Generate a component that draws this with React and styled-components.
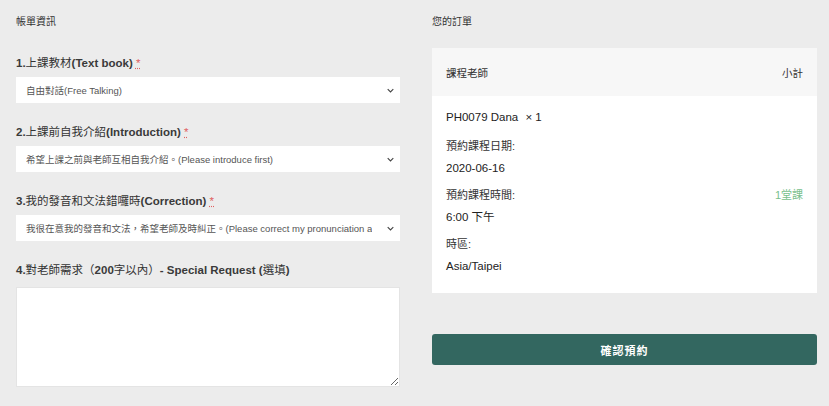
import React from "react";
import styled, { createGlobalStyle } from "styled-components";

const GlobalStyle = createGlobalStyle`
  html, body {
    margin: 0;
    background: #ececec;
  }
  body {
    font-family: "Liberation Sans", "Noto Sans CJK TC", sans-serif;
    color: #333;
  }
`;

const fields = [
  {
    num: "1.",
    zh: "上課教材",
    en: "(Text book)",
    value: "自由對話(Free Talking)",
  },
  {
    num: "2.",
    zh: "上課前自我介紹",
    en: "(Introduction)",
    value: "希望上課之前與老師互相自我介紹。(Please introduce first)",
  },
  {
    num: "3.",
    zh: "我的發音和文法錯囉時",
    en: "(Correction)",
    value:
      "我很在意我的發音和文法，希望老師及時糾正。(Please correct my pronunciation and grammar)",
  },
];

export default function App() {
  return (
    <>
      <GlobalStyle />
      <Page>
        <Column>
          <SectionTitle $gap="25px">帳單資訊</SectionTitle>
          {fields.map((f) => (
            <Field key={f.num}>
              <Label>
                <Latin>{f.num}</Latin>
                {f.zh}
                <Latin>{f.en}</Latin> <Required title="required">*</Required>
              </Label>
              <SelectWrap>
                <Select defaultValue={f.value}>
                  <option>{f.value}</option>
                </Select>
                <Chevron viewBox="0 0 10 6">
                  <path d="M1 1l4 4 4-4" fill="none" stroke="#444" strokeWidth="1.6" />
                </Chevron>
              </SelectWrap>
            </Field>
          ))}
          <Field>
            <Label $last>
              <Latin>4.</Latin>對老師需求（<Latin>200</Latin>字以內）
              <Latin>- Special Request (</Latin>選填<Latin>)</Latin>
            </Label>
            <TextArea />
          </Field>
        </Column>

        <Column>
          <SectionTitle $gap="18px">您的訂單</SectionTitle>
          <Card>
            <CardHead>
              <span>課程老師</span>
              <span>小計</span>
            </CardHead>
            <CardBody>
              <Item>
                PH0079 Dana <Times>× 1</Times>
              </Item>
              <MetaRow>
                <MetaLabel>預約課程日期:</MetaLabel>
              </MetaRow>
              <MetaValue>2020-06-16</MetaValue>
              <MetaRow>
                <MetaLabel>預約課程時間:</MetaLabel>
                <Subtotal>1堂課</Subtotal>
              </MetaRow>
              <MetaValue>6:00 下午</MetaValue>
              <MetaRow>
                <MetaLabel>時區:</MetaLabel>
              </MetaRow>
              <MetaValue>Asia/Taipei</MetaValue>
            </CardBody>
          </Card>
          <ConfirmButton>確認預約</ConfirmButton>
        </Column>
      </Page>
    </>
  );
}

const Page = styled.div`
  display: grid;
  grid-template-columns: 384px 385px;
  column-gap: 32px;
  padding: 14px 12px 0 16px;
`;

const Column = styled.div`
  display: flex;
  flex-direction: column;
`;

const SectionTitle = styled.div`
  font-size: 10px;
  line-height: 16px;
  color: #333;
  margin-bottom: ${(p) => p.$gap};
`;

const Field = styled.div`
  display: flex;
  flex-direction: column;
  margin-bottom: 21px;
`;

const Label = styled.label`
  font-size: 11.5px;
  line-height: 16px;
  font-weight: 400;
  color: #333;
  margin-bottom: ${(p) => (p.$last ? "9px" : "6px")};
`;

const Latin = styled.span`
  font-weight: 700;
  color: #3a3a3a;
`;

const Required = styled.abbr`
  color: #e06060;
  text-decoration: underline dotted;
  font-weight: 400;
`;

const SelectWrap = styled.div`
  position: relative;
  height: 26px;
`;

const Select = styled.select`
  appearance: none;
  width: 100%;
  height: 26px;
  border: none;
  background: #fff;
  font-family: inherit;
  font-size: 9.5px;
  color: #555;
  padding: 0 28px 0 10px;
  outline: none;
`;

const Chevron = styled.svg`
  position: absolute;
  right: 6px;
  top: 11px;
  width: 7px;
  height: 5px;
  pointer-events: none;
`;

const TextArea = styled.textarea`
  box-sizing: border-box;
  width: 100%;
  height: 100px;
  border: 1px solid #e4e4e4;
  background: #fff;
  margin: 0;
  outline: none;
`;

const Card = styled.div`
  background: #fff;
`;

const CardHead = styled.div`
  display: flex;
  justify-content: space-between;
  align-items: center;
  height: 48px;
  padding: 0 14px;
  background: #f7f7f7;
  font-size: 10.5px;
  color: #333;
`;

const CardBody = styled.div`
  padding: 13px 14px 19px;
`;

const Item = styled.div`
  font-size: 11.5px;
  line-height: 16px;
  color: #222;
  margin-bottom: 13px;
`;

const Times = styled.span`
  margin-left: 4px;
`;

const MetaRow = styled.div`
  display: flex;
  justify-content: space-between;
  align-items: center;
  line-height: 16px;
`;

const MetaLabel = styled.span`
  font-size: 11px;
  color: #333;
`;

const Subtotal = styled.span`
  font-size: 11px;
  color: #78c08c;
`;

const MetaValue = styled.div`
  font-size: 11.5px;
  line-height: 16px;
  color: #222;
  margin-top: 6px;
  margin-bottom: 11px;
  &:last-child {
    margin-bottom: 0;
  }
`;

const ConfirmButton = styled.button`
  margin-top: 41px;
  height: 31px;
  border: none;
  border-radius: 3px;
  background: #336760;
  color: #fff;
  font-family: inherit;
  font-size: 11px;
  font-weight: 700;
  letter-spacing: 1px;
`;
